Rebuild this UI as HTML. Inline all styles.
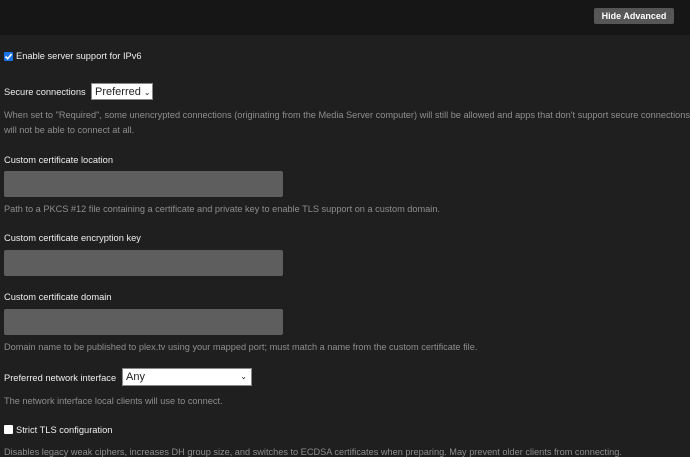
<!DOCTYPE html>
<html><head><style>
body{margin:0;width:690px;height:453px;overflow:hidden;background:#1f1f1f;font-family:"Liberation Sans",sans-serif;position:relative}
.top{position:absolute;left:0;top:0;width:690px;height:35px;background:#161616}
.btn{position:absolute;left:594px;top:8px;width:80px;height:16px;background:#565656;border-radius:2px;color:#fff;font-weight:bold;font-size:9px;line-height:16px;text-align:center}
.t{position:absolute;left:4px;white-space:nowrap;font-size:9.3px;color:#eee}
.d{position:absolute;left:4px;white-space:nowrap;font-size:9.2px;color:#8e8e8e}
.in{position:absolute;left:4px;width:279px;height:26px;background:#5e5e5e;border-radius:2px}
.sel{position:absolute;background:#fff;border:1px solid #888;color:#222;font-size:11px;line-height:16px;padding-left:3px;box-sizing:border-box}
.cb{position:absolute;left:4px;width:9px;height:9px;border-radius:1px}
</style></head><body>
<div class="top"><div class="btn">Hide Advanced</div></div>
<div class="cb" style="top:52px;background:#1a73e8"><svg width="9" height="9" style="position:absolute;left:0;top:0"><path d="M1.5 4.5L3.7 6.7L7.6 2" stroke="#fff" stroke-width="1.6" fill="none"/></svg></div>
<div class="t" style="left:16px;top:51px">Enable server support for IPv6</div>
<div class="t" style="top:87px">Secure connections</div>
<div class="sel" style="left:91px;top:83px;width:62px;height:17px">Preferred <span style="font-size:8px">&#8964;</span></div>
<div class="d" style="top:110px">When set to "Required", some unencrypted connections (originating from the Media Server computer) will still be allowed and apps that don't support secure connections</div>
<div class="d" style="top:125px">will not be able to connect at all.</div>
<div class="t" style="top:155px">Custom certificate location</div>
<div class="in" style="top:171px"></div>
<div class="d" style="top:204px">Path to a PKCS #12 file containing a certificate and private key to enable TLS support on a custom domain.</div>
<div class="t" style="top:233px">Custom certificate encryption key</div>
<div class="in" style="top:250px"></div>
<div class="t" style="top:292px">Custom certificate domain</div>
<div class="in" style="top:309px"></div>
<div class="d" style="top:342px">Domain name to be published to plex.tv using your mapped port; must match a name from the custom certificate file.</div>
<div class="t" style="top:373px">Preferred network interface</div>
<div class="sel" style="left:122px;top:368px;width:130px;height:18px">Any<span style="position:absolute;right:4px;top:0;font-size:8px">&#8964;</span></div>
<div class="d" style="top:396px">The network interface local clients will use to connect.</div>
<div class="cb" style="top:425px;background:#fff"></div>
<div class="t" style="left:16px;top:425px">Strict TLS configuration</div>
<div class="d" style="top:447px">Disables legacy weak ciphers, increases DH group size, and switches to ECDSA certificates when preparing. May prevent older clients from connecting.</div>
</body></html>
